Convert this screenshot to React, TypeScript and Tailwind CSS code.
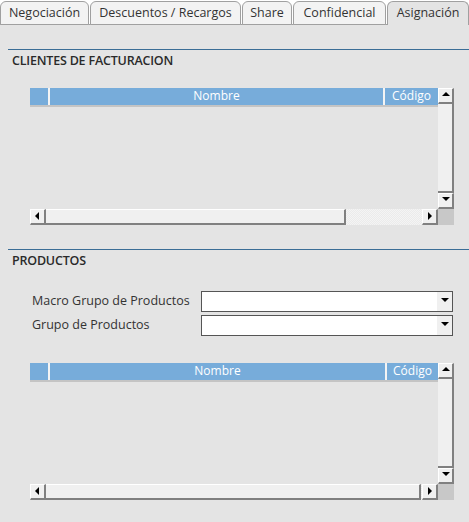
import React from "react"

const font = { fontFamily: '"Open Sans", "Noto Sans", sans-serif' }

function Tab({ label, active, w }: { label: string; active?: boolean; w: string }) {
  return (
    <div
      className={`${w} h-[24px] flex items-center justify-center rounded-t-[6px] border border-[#a0a0a0] text-[12.5px] text-[#333] ${
        active ? "bg-[#e4e4e4] border-b-0" : "bg-[#f3f3f3]"
      }`}
    >
      {label}
    </div>
  )
}

function Arrow({ dir }: { dir: "up" | "down" | "left" | "right" }) {
  const pts = {
    up: "1,6 5,2 9,6",
    down: "1,2 5,6 9,2",
    left: "6,1 2,5 6,9",
    right: "3,1 7,5 3,9",
  }[dir]
  return (
    <svg width="10" height="10" viewBox="0 0 10 10">
      <polygon points={pts} fill="#000" />
    </svg>
  )
}

function Btn({ dir }: { dir: "up" | "down" | "left" | "right" }) {
  return (
    <div className="w-[16px] h-[16px] bg-[#f0f0f0] border-t border-l border-t-white border-l-white border-r-2 border-b-2 border-r-[#808080] border-b-[#808080] flex items-center justify-center shrink-0">
      <Arrow dir={dir} />
    </div>
  )
}

function Grid({ nombreW, thumbW }: { nombreW: string; thumbW: string }) {
  return (
    <div className="ml-[30px] w-[424px] flex flex-col">
      <div className="flex h-[121px]">
        <div className="flex-1 flex flex-col">
          <div className="flex h-[19px] bg-[#77acda] border-b-2 border-[#c4c4c4] text-white text-[12px]">
            <div className="w-[20px] border-r-2 border-[#f4f4f4]" />
            <div className={`${nombreW} border-r-2 border-[#f4f4f4] flex items-center justify-center`}>Nombre</div>
            <div className="flex-1 flex items-center justify-center">Código</div>
          </div>
        </div>
        <div className="w-[16px] flex flex-col">
          <Btn dir="up" />
          <div className="flex-1 bg-[#f0f0f0] border-r-2 border-[#808080] border-b-2" />
          <Btn dir="down" />
        </div>
      </div>
      <div className="flex h-[16px]">
        <Btn dir="left" />
        <div className={`${thumbW} h-[16px] bg-[#f0f0f0] border-t border-t-white border-b-2 border-b-[#808080] border-r-2 border-r-[#808080]`} />
        <div className="flex-1 bg-[repeating-conic-gradient(#f4f4f4_0_25%,#ebebeb_0_50%)] bg-[length:2px_2px]" />
        <Btn dir="right" />
        <div className="w-[16px] bg-[#c8c8c8]" />
      </div>
    </div>
  )
}

function Select() {
  return (
    <div className="w-[252px] h-[21px] bg-white border border-[#555] flex justify-end">
      <div className="w-[15px] bg-[#f0f0f0] flex items-center justify-center">
        <Arrow dir="down" />
      </div>
    </div>
  )
}

export default function App() {
  return (
    <div className="w-[469px] h-[522px] bg-[#e4e4e4] text-[#333] overflow-hidden" style={font}>
      <div className="flex gap-[1px] pt-[1px] border-b border-[#a0a0a0] bg-white h-[25px]">
        <Tab label="Negociación" w="w-[89px]" />
        <Tab label="Descuentos / Recargos" w="w-[151px]" />
        <Tab label="Share" w="w-[50px]" />
        <Tab label="Confidencial" w="w-[93px]" />
        <Tab label="Asignación" w="w-[82px]" active />
      </div>

      <div className="mt-[24px] ml-[8px] border-t border-[#3b6d96]" />
      <h2 className="ml-[12px] mt-[2px] text-[12.5px] font-semibold tracking-[-0.2px] text-[#2a2a2a]">CLIENTES DE FACTURACION</h2>

      <div className="mt-[17px]">
        <Grid nombreW="w-[335px]" thumbW="w-[300px]" />
      </div>

      <div className="mt-[24px] ml-[8px] border-t border-[#3b6d96]" />
      <h2 className="ml-[12px] mt-[2px] text-[12.5px] font-semibold tracking-[-0.2px] text-[#2a2a2a]">PRODUCTOS</h2>

      <div className="mt-[20px] ml-[32px] flex flex-col gap-[3px]">
        <div className="flex items-center">
          <span className="w-[169px] text-[12.5px]">Macro Grupo de Productos</span>
          <Select />
        </div>
        <div className="flex items-center">
          <span className="w-[169px] text-[12.5px]">Grupo de Productos</span>
          <Select />
        </div>
      </div>

      <div className="mt-[27px]">
        <Grid nombreW="w-[337px]" thumbW="w-[375px]" />
      </div>
    </div>
  )
}
